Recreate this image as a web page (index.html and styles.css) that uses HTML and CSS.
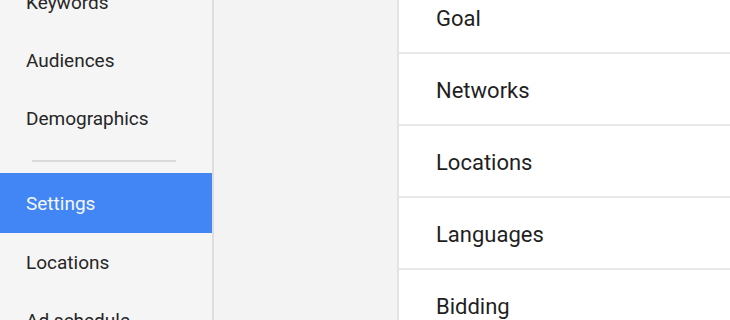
FILE: index.html
```html
<!DOCTYPE html>
<html>
<head>
<meta charset="utf-8">
<link rel="stylesheet" href="styles.css">
</head>
<body>
<div class="app">
  <nav class="sidebar">
    <ul class="nav-list">
      <li class="nav-item">Keywords</li>
      <li class="nav-item">Audiences</li>
      <li class="nav-item">Demographics</li>
      <li class="nav-sep"><span class="nav-rule"></span></li>
      <li class="nav-item active">Settings</li>
      <li class="nav-item">Locations</li>
      <li class="nav-item">Ad schedule</li>
    </ul>
  </nav>
  <div class="gutter"></div>
  <main class="panel">
    <ul class="settings-list">
      <li class="setting">Goal</li>
      <li class="setting">Networks</li>
      <li class="setting">Locations</li>
      <li class="setting">Languages</li>
      <li class="setting">Bidding</li>
    </ul>
  </main>
</div>
</body>
</html>
```

FILE: styles.css
```css
html, body {
  margin: 0;
  padding: 0;
  height: 320px;
  overflow: hidden;
  font-family: Roboto, "Liberation Sans", sans-serif;
  background: #f4f4f4;
}

.app {
  display: flex;
  height: 320px;
  overflow: hidden;
}

.sidebar {
  width: 212px;
  flex: none;
  background: #f5f5f5;
  border-right: 2px solid #dedede;
  overflow: hidden;
}

.nav-list {
  list-style: none;
  margin: -27px 0 0 0;
  padding: 0;
}

.nav-item {
  height: 57px;
  padding-top: 1px;
  line-height: 58px;
  padding-left: 26px;
  font-size: 19px;
  color: #262626;
  white-space: nowrap;
}

.nav-item.active {
  height: 59px;
  line-height: 60px;
  background: #4285f4;
  color: #f4f8ff;
}

.nav-sep {
  height: 26px;
  display: flex;
  align-items: center;
  padding: 0 36px 0 32px;
}

.nav-rule {
  display: block;
  flex: 1;
  height: 2px;
  background: #dadada;
  margin-top: 1px;
}

.gutter {
  width: 183px;
  flex: none;
  background: #f3f3f3;
}

.panel {
  flex: 1;
  background: #ffffff;
  border-left: 2px solid #e3e3e3;
  overflow: hidden;
}

.settings-list {
  list-style: none;
  margin: -20px 0 0 0;
  padding: 0;
}

.setting {
  height: 68px;
  padding-top: 2px;
  line-height: 70px;
  border-top: 2px solid #e8e8e8;
  padding-left: 37px;
  font-size: 22px;
  color: #1f1f1f;
  white-space: nowrap;
}
```
